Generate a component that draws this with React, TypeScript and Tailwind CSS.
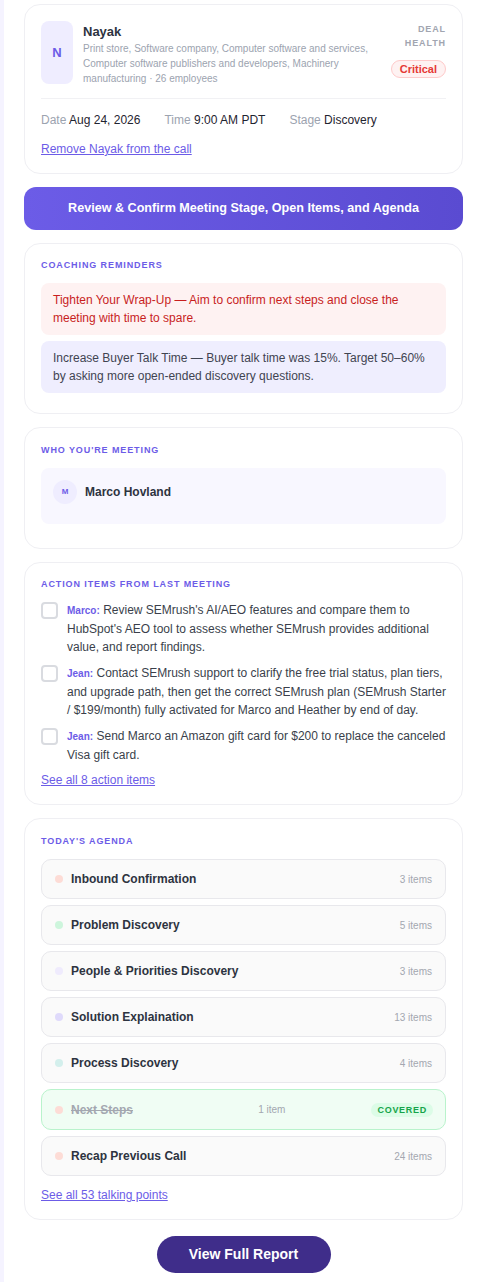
import React from "react";

const agenda = [
  { name: "Inbound Confirmation", count: "3 items", dot: "bg-[#fddcd6]" },
  { name: "Problem Discovery", count: "5 items", dot: "bg-[#cdf5dc]" },
  { name: "People & Priorities Discovery", count: "3 items", dot: "bg-[#efebfd]" },
  { name: "Solution Explaination", count: "13 items", dot: "bg-[#dfdafb]" },
  { name: "Process Discovery", count: "4 items", dot: "bg-[#d3efec]" },
  { name: "Next Steps", count: "1 item", dot: "bg-[#fddcd6]", covered: true },
  { name: "Recap Previous Call", count: "24 items", dot: "bg-[#fddcd6]" },
];

const actions = [
  {
    who: "Marco:",
    text: "Review SEMrush's AI/AEO features and compare them to HubSpot's AEO tool to assess whether SEMrush provides additional value, and report findings.",
  },
  {
    who: "Jean:",
    text: "Contact SEMrush support to clarify the free trial status, plan tiers, and upgrade path, then get the correct SEMrush plan (SEMrush Starter / $199/month) fully activated for Marco and Heather by end of day.",
  },
  {
    who: "Jean:",
    text: "Send Marco an Amazon gift card for $200 to replace the canceled Visa gift card.",
  },
];

function Card({ children, className = "" }: { children: React.ReactNode; className?: string }) {
  return (
    <div className={`bg-white border border-[#efeff3] rounded-2xl px-4 ${className}`}>
      {children}
    </div>
  );
}

function SectionTitle({ children }: { children: React.ReactNode }) {
  return (
    <h3 className="text-[9px] leading-3 font-bold tracking-[0.1em] text-[#6c5ce7] uppercase">
      {children}
    </h3>
  );
}

export default function App() {
  return (
    <div className="flex min-h-[1282px] bg-white font-[family-name:Liberation_Sans,Arial,sans-serif]">
      {/* left strip */}
      <div className="w-1 bg-[#f5f3ff] shrink-0" />

      <div className="flex-1 pl-5 pr-[19px] pt-1 flex flex-col gap-[13px]">
        {/* company header */}
        <Card className="pt-4 pb-4">
          <div className="flex items-start gap-[10px]">
            <div className="w-8 h-[63px] shrink-0 rounded-lg bg-[#efedff] flex items-center justify-center text-[#6c5ce7] font-bold text-[13px]">
              N
            </div>
            <div className="flex-1 min-w-0 pt-[3px]">
              <div className="text-[13px] font-bold text-[#2d3340] leading-4">Nayak</div>
              <p className="text-[10px] leading-[15px] text-[#9ca3af] mt-[1px]">
                Print store, Software company, Computer software and services, Computer software
                publishers and developers, Machinery manufacturing · 26 employees
              </p>
            </div>
            <div className="flex flex-col items-end shrink-0 pt-[1px]">
              <div className="text-[9px] font-bold tracking-[0.1em] text-[#a1a5b0] leading-[14px] text-right">
                DEAL
                <br />
                HEALTH
              </div>
              <span className="mt-[10px] px-[8px] py-[1px] rounded-full bg-[#fef2f2] border border-[#fecaca] text-[#e53935] text-[11px] font-bold leading-[14px]">
                Critical
              </span>
            </div>
          </div>
          <div className="border-t border-[#f1f1f4] mt-3 pt-[13px] flex gap-6 text-[12px] leading-4">
            <span>
              <span className="text-[#9ca3af]">Date</span>{" "}
              <span className="text-[#1f2430]">Aug 24, 2026</span>
            </span>
            <span>
              <span className="text-[#9ca3af]">Time</span>{" "}
              <span className="text-[#1f2430]">9:00 AM PDT</span>
            </span>
            <span>
              <span className="text-[#9ca3af]">Stage</span>{" "}
              <span className="text-[#1f2430]">Discovery</span>
            </span>
          </div>
          <a href="#" className="block mt-[13px] text-[12px] leading-4 text-[#6c5ce7] underline">
            Remove Nayak from the call
          </a>
        </Card>

        {/* review button */}
        <button className="h-[43px] rounded-xl bg-gradient-to-r from-[#6c5ce7] to-[#5a4bd1] text-white text-[12.6px] font-bold">
          Review &amp; Confirm Meeting Stage, Open Items, and Agenda
        </button>

        {/* coaching */}
        <Card className="pt-[15px] pb-5">
          <SectionTitle>Coaching Reminders</SectionTitle>
          <div className="mt-3 flex flex-col gap-[6px]">
            <div className="bg-[#fef2f2] rounded-lg px-3 py-2 text-[12px] leading-[18px] text-[#c81e1e]">
              Tighten Your Wrap-Up — Aim to confirm next steps and close the meeting with time to spare.
            </div>
            <div className="bg-[#efeefe] rounded-lg px-3 py-2 text-[12px] leading-[18px] text-[#3f4451]">
              Increase Buyer Talk Time — Buyer talk time was 15%. Target 50–60% by asking more
              open-ended discovery questions.
            </div>
          </div>
        </Card>

        {/* who */}
        <Card className="pt-[16px] pb-6">
          <SectionTitle>Who You're Meeting</SectionTitle>
          <div className="mt-[12px] bg-[#f8f7ff] rounded-lg p-3 h-14">
            <div className="flex items-center gap-2">
              <div className="w-6 h-6 rounded-full bg-[#efedff] flex items-center justify-center text-[8px] font-bold text-[#6c5ce7]">
                M
              </div>
              <span className="text-[12px] font-bold text-[#2d3340]">Marco Hovland</span>
            </div>
          </div>
        </Card>

        {/* action items */}
        <Card className="pt-[15px] pb-[16px]">
          <SectionTitle>Action Items From Last Meeting</SectionTitle>
          <div className="mt-[11px] flex flex-col gap-2">
            {actions.map((a, i) => (
              <div key={i} className="flex gap-[9px]">
                <div className="w-[17px] h-[17px] shrink-0 mt-[1px] rounded-[4px] border-2 border-[#d9dbe0] bg-white" />
                <p className="text-[12px] leading-[18px] text-[#3a3f4b]">
                  <span className="text-[10px] font-bold text-[#6c5ce7]">{a.who}</span> {a.text}
                </p>
              </div>
            ))}
          </div>
          <a href="#" className="block mt-[8px] text-[12px] leading-4 text-[#6c5ce7] underline">
            See all 8 action items
          </a>
        </Card>

        {/* agenda */}
        <Card className="pt-[16px] pb-[16px]">
          <SectionTitle>Today's Agenda</SectionTitle>
          <div className="mt-[12px] flex flex-col gap-[6px]">
            {agenda.map((a) =>
              a.covered ? (
                <div
                  key={a.name}
                  className="h-[41px] rounded-[10px] border border-[#b9f3cc] bg-[#f0fdf4] flex items-center pl-[13px] pr-[12px]"
                >
                  <span className={`w-2 h-2 rounded-full ${a.dot} shrink-0`} />
                  <span className="ml-2 flex-1 text-[12px] font-bold text-[#a3a7b0] line-through">
                    {a.name}
                  </span>
                  <span className="text-[10px] text-[#a3a7b0]">{a.count}</span>
                  <span className="ml-[86px] px-[6px] py-[2px] rounded-full bg-[#dcfce7] text-[#16a34a] text-[9px] font-bold tracking-[0.08em] leading-[10px]">
                    COVERED
                  </span>
                </div>
              ) : (
                <div
                  key={a.name}
                  className="h-10 rounded-[10px] border border-[#e8e8ec] bg-[#fafafa] flex items-center pl-[13px] pr-[13px]"
                >
                  <span className={`w-2 h-2 rounded-full ${a.dot} shrink-0`} />
                  <span className="ml-2 flex-1 text-[12px] font-bold text-[#2d3340]">{a.name}</span>
                  <span className="text-[10px] text-[#a3a7b0]">{a.count}</span>
                </div>
              )
            )}
          </div>
          <a href="#" className="block mt-[11px] text-[12px] leading-4 text-[#6c5ce7] underline">
            See all 53 talking points
          </a>
        </Card>

        {/* view report */}
        <div className="flex justify-center pt-[3px]">
          <button className="w-[174px] h-[37px] rounded-full bg-[#3f2d8a] text-white text-[14px] font-bold">
            View Full Report
          </button>
        </div>
      </div>
    </div>
  );
}
